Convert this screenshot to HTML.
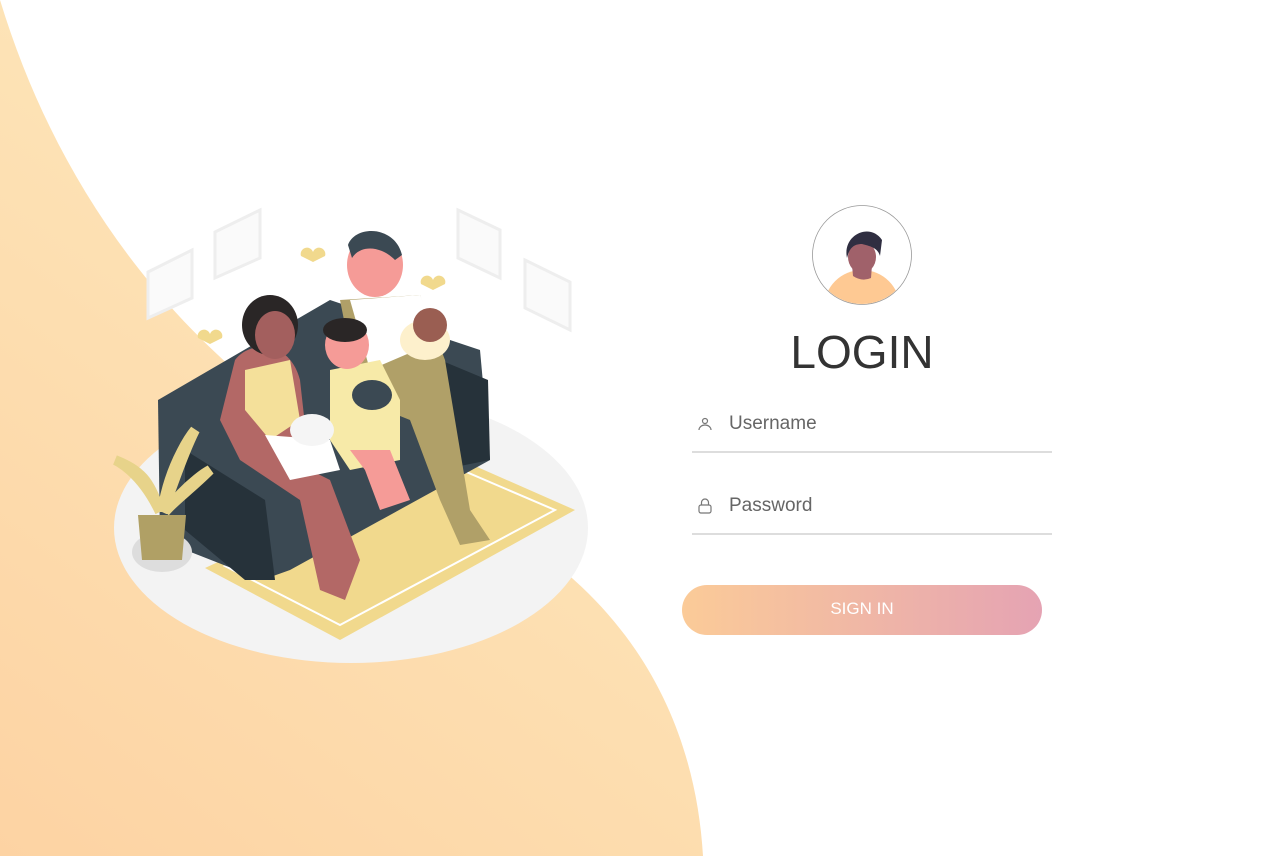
<!DOCTYPE html>
<html><head><style>
body{margin:0;width:1280px;height:856px;overflow:hidden;background:#fff;font-family:"Liberation Sans",sans-serif;position:relative}
.f{position:absolute}
</style></head><body>
<svg class="f" style="left:0;top:0" width="1280" height="856">
<defs><linearGradient id="bg" x1="0" y1="1" x2="0.6" y2="0"><stop offset="0" stop-color="#fdd3a3"/><stop offset="1" stop-color="#fde9bd"/></linearGradient>
<linearGradient id="bt" x1="0" x2="1"><stop offset="0" stop-color="#fbcb98"/><stop offset="1" stop-color="#e5a3b3"/></linearGradient></defs>
<path d="M0,0 C70,230 230,420 470,510 C630,590 695,720 703,856 L0,856 Z" fill="url(#bg)"/>
<ellipse cx="351" cy="528" rx="237" ry="135" fill="#f3f3f3"/>
<polygon points="205,568 450,455 575,510 340,640" fill="#f1d98d"/>
<polygon points="225,566 450,465 555,510 340,625" fill="none" stroke="#fff" stroke-width="2"/>
<path d="M158,400 L330,300 L480,350 L490,460 L290,570 L262,580 L160,540 Z" fill="#3b4953"/>
<path d="M185,450 L265,500 L275,580 L245,580 L185,530 Z" fill="#26323a"/>
<path d="M440,360 L488,380 L490,460 L440,470 Z" fill="#26323a"/>
<ellipse cx="162" cy="552" rx="30" ry="20" fill="#ddd"/>
<path d="M138,515 L186,515 L182,560 L142,560 Z" fill="#b0a065"/>
<path d="M160,512 C140,470 115,460 115,460 C140,470 150,480 160,512 M162,512 C170,460 195,430 195,430 C180,460 172,490 162,512 M165,512 C190,480 210,470 210,470 C190,490 175,500 165,512" stroke="#e7d38a" stroke-width="10" fill="none"/>
<path d="M235,360 C250,340 290,340 300,380 L310,470 L330,480 L360,560 L345,600 L320,590 L300,500 L240,460 L220,420 Z" fill="#b36866"/>
<path d="M245,370 L290,360 L300,420 L270,440 L245,410 Z" fill="#f4e09a"/>
<path d="M265,435 L330,440 L340,470 L290,480 Z" fill="#fff"/>
<ellipse cx="270" cy="325" rx="28" ry="30" fill="#2a2626"/>
<ellipse cx="275" cy="335" rx="20" ry="24" fill="#a35f5e"/>
<path d="M340,300 L420,295 L445,360 L470,510 L490,540 L460,545 L440,500 L410,420 L360,400 Z" fill="#b0a068"/>
<path d="M350,300 L420,295 L440,340 L370,370 Z" fill="#fff"/>
<ellipse cx="375" cy="265" rx="28" ry="32" fill="#f59b97"/>
<path d="M348,245 C355,225 395,225 402,255 L395,260 C380,245 360,245 352,258 Z" fill="#3b4953"/>
<ellipse cx="425" cy="340" rx="25" ry="20" fill="#fdf0cc"/>
<ellipse cx="430" cy="325" rx="17" ry="17" fill="#9a5e52"/>
<path d="M330,370 L380,360 L400,400 L400,460 L350,470 L330,440 Z" fill="#f7eaa8"/>
<path d="M350,450 L390,450 L410,500 L380,510 L365,470 Z" fill="#f59b97"/>
<ellipse cx="347" cy="345" rx="22" ry="24" fill="#f59b97"/>
<ellipse cx="345" cy="330" rx="22" ry="12" fill="#2a2626"/>
<ellipse cx="372" cy="395" rx="20" ry="15" fill="#3b4953"/>
<ellipse cx="312" cy="430" rx="22" ry="16" fill="#f5f5f5"/>
<path d="M313,262 l-12,-6 a6,6 0 1 1 12,-4 a6,6 0 1 1 12,4 Z" fill="#f1d98d"/>
<path d="M433,290 l-12,-6 a6,6 0 1 1 12,-4 a6,6 0 1 1 12,4 Z" fill="#f1d98d"/>
<path d="M210,344 l-12,-6 a6,6 0 1 1 12,-4 a6,6 0 1 1 12,4 Z" fill="#f1d98d"/>
<polygon points="148,272 192,250 192,298 148,318" fill="#fafafa" stroke="#eee" stroke-width="3"/>
<polygon points="215,232 260,210 260,258 215,278" fill="#fafafa" stroke="#eee" stroke-width="3"/>
<polygon points="458,210 500,230 500,278 458,258" fill="#fafafa" stroke="#eee" stroke-width="3"/>
<polygon points="525,260 570,282 570,330 525,308" fill="#fafafa" stroke="#eee" stroke-width="3"/>
<circle cx="862" cy="255" r="49.5" fill="#fff" stroke="#999" stroke-width="0.8"/>
<clipPath id="c"><circle cx="862" cy="255" r="49"/></clipPath>
<g clip-path="url(#c)"><ellipse cx="862" cy="308" rx="38" ry="38" fill="#fec993"/>
<path d="M852,265 L872,265 L871,278 Q862,282 853,276 Z" fill="#a0616a"/>
<ellipse cx="862" cy="257" rx="14" ry="16" fill="#a0616a"/>
<path d="M847,258 C842,235 870,222 882,240 L880,256 C878,248 870,246 862,244 C852,244 849,250 847,258Z" fill="#2f2e41"/></g>
<g fill="none" stroke="#777" stroke-width="1.2"><circle cx="705" cy="421" r="2.5"/><path d="M699,430 a6,5 0 0 1 12,0"/>
<rect x="699" y="505" width="12" height="8" rx="2"/><path d="M701.5,505 v-2.5 a3.5,3.5 0 0 1 7,0 v2.5"/></g>
<rect x="692" y="451" width="360" height="2" fill="#ddd"/>
<rect x="692" y="533" width="360" height="2" fill="#ddd"/>
<rect x="682" y="585" width="360" height="50" rx="25" fill="url(#bt)"/>
</svg>
<div class="f" style="left:680px;top:325px;width:364px;text-align:center;font-size:46px;color:#333">LOGIN</div>
<div class="f" style="left:729px;top:413px;font-size:19px;color:#666">Username</div>
<div class="f" style="left:729px;top:495px;font-size:19px;color:#666">Password</div>
<div class="f" style="left:682px;top:599px;width:360px;text-align:center;font-size:17px;color:#fff">SIGN IN</div>
</body></html>
